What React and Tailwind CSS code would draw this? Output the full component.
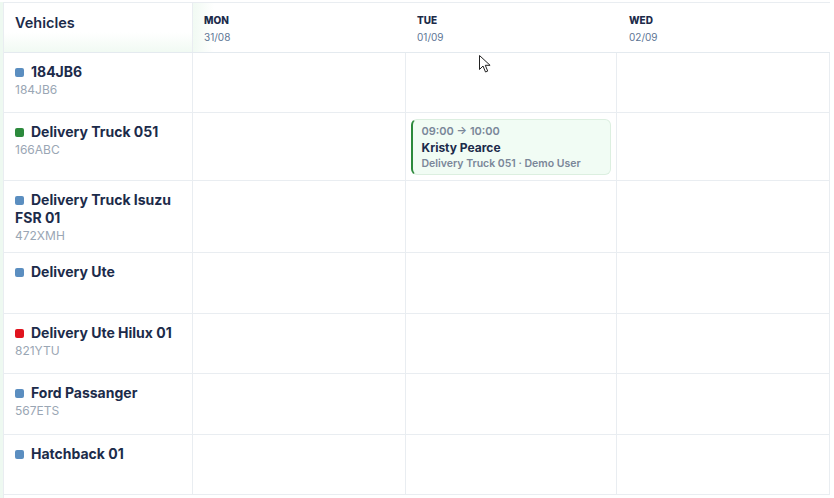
import React from 'react';

const days = [
    { name: 'MON', date: '31/08' },
    { name: 'TUE', date: '01/09' },
    { name: 'WED', date: '02/09' },
];

const vehicles = [
    { name: '184JB6', plate: '184JB6', color: 'bg-[#5b8ec0]', h: 'h-[60px]' },
    { name: 'Delivery Truck 051', plate: '166ABC', color: 'bg-[#2c8a3c]', h: 'h-[68px]', event: 1 },
    { name: 'Delivery Truck Isuzu FSR 01', plate: '472XMH', color: 'bg-[#5b8ec0]', h: 'h-[72px]' },
    { name: 'Delivery Ute', plate: '', color: 'bg-[#5b8ec0]', h: 'h-[61px]' },
    { name: 'Delivery Ute Hilux 01', plate: '821YTU', color: 'bg-[#e0141e]', h: 'h-[60px]' },
    { name: 'Ford Passanger', plate: '567ETS', color: 'bg-[#5b8ec0]', h: 'h-[61px]' },
    { name: 'Hatchback 01', plate: '', color: 'bg-[#5b8ec0]', h: 'h-[60px]' },
];

const Booking = () => (
    <div className="mx-[5px] mt-[6px] rounded-md border border-[#dcefe0] border-l-2 border-l-[#2c8a3c] bg-[#f1fcf4] pl-[9px] pt-[4px] pb-[3px]">
        <div className="text-[11px] font-semibold leading-[15px] text-[#7a8799]">09:00 → 10:00</div>
        <div className="text-[12px] font-bold leading-[17px] text-[#1c2b4a]">Kristy Pearce</div>
        <div className="text-[10.5px] font-semibold leading-[15px] text-[#7a8799]">Delivery Truck 051 · Demo User</div>
    </div>
);

const Pointer = () => (
    <svg className="absolute left-[479px] top-[55px]" width="14" height="20" viewBox="0 0 14 20">
        <path d="M0.5 0.5 L0.5 14.5 L4 11 L6.5 17 L8.7 16.1 L6.3 10.3 L11.1 10.3 Z" fill="#fff" stroke="#222" strokeWidth="1" strokeLinejoin="round" />
    </svg>
);

export default function App() {
    return (
        <div className="relative h-[498px] w-[834px] overflow-hidden bg-white font-['Inter',sans-serif]">
            <div className="flex h-full pt-[2px]">
                <div className="w-[3px] bg-[#eef9f1]" />
                <div className="w-[827px] border-l border-t border-[#e9edf1]">
                    {/* header */}
                    <div className="flex h-[50px] border-b border-[#e4eaef]">
                        <div className="w-[188px] bg-gradient-to-b from-white from-60% to-[#f1faf3] pl-[11px] pt-[10px] text-[14.5px] font-semibold leading-[20px] text-[#1c2b4a]">
                            Vehicles
                        </div>
                        {days.map((d, i) => (
                            <div key={d.name} className={`flex flex-col border-l pl-[11px] pt-[10px] ${i === 1 ? 'w-[212px]' : 'w-[213px]'} ${i === 0 ? 'border-[#e9edf1] bg-gradient-to-r from-[#f1faf3] to-white to-10%' : 'border-transparent'}`}>
                                <span className="text-[10px] font-extrabold leading-[14px] text-[#1c2b4a]">{d.name}</span>
                                <span className="mt-[3px] text-[10px] leading-[14px] text-[#5d7594]">{d.date}</span>
                            </div>
                        ))}
                    </div>
                    {/* vehicle rows */}
                    {vehicles.map((v) => (
                        <div key={v.name} className={`flex border-b border-[#e9edf1] ${v.h}`}>
                            <div className="w-[188px] pl-[11px] pr-[10px] pt-[10px]">
                                <div className="text-[14px] font-bold leading-[18px] text-[#1c2b4a]">
                                    <span className={`mr-[7px] inline-block h-[9px] w-[9px] rounded-[2px] align-[0px] ${v.color}`} />
                                    {v.name}
                                </div>
                                {v.plate && <div className="mt-[1px] text-[12px] leading-[16px] text-[#9aa6b4]">{v.plate}</div>}
                            </div>
                            {days.map((d, i) => (
                                <div key={d.name} className={`border-l border-[#e9edf1] ${i === 1 ? 'w-[212px]' : 'w-[213px]'}`}>
                                    {v.event === i && <Booking />}
                                </div>
                            ))}
                            <div className="border-l border-[#e9edf1]" />
                        </div>
                    ))}
                </div>
            </div>
            <Pointer />
        </div>
    );
}
